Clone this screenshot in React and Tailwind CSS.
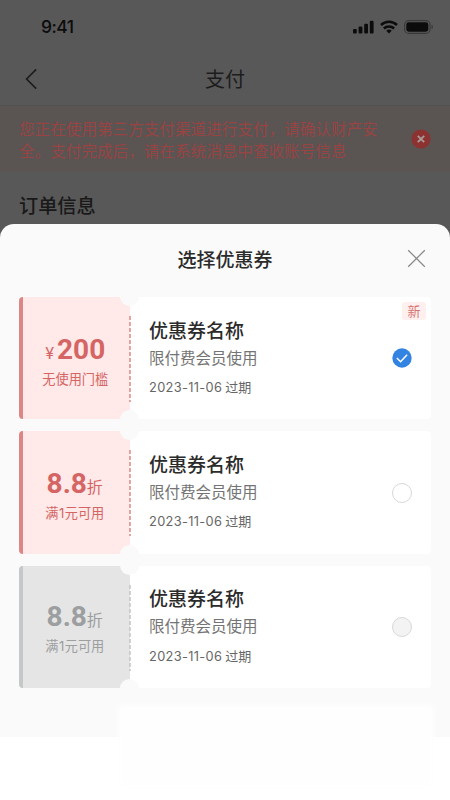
import React from "react";

const CJK = "font-['Noto_Sans_CJK_SC',sans-serif]";

function StatusBar() {
  return (
    <div className="flex h-[54px] items-center justify-between pl-[41px] pr-4 text-[#0c0c0c]">
      <span className="font-['Inter',sans-serif] text-[17.5px] font-medium leading-[22px] tracking-[-0.5px]">9:41</span>
      <div className="flex items-center gap-[6px]">
        <svg width="21" height="14" viewBox="0 0 21 14" fill="currentColor">
          <rect x="0" y="9" width="3.8" height="4.6" rx="1.1" />
          <rect x="5.6" y="6.6" width="3.8" height="7" rx="1.1" />
          <rect x="11.2" y="3.8" width="3.8" height="9.8" rx="1.1" />
          <rect x="16.8" y="0.8" width="3.8" height="12.8" rx="1.1" />
        </svg>
        <svg width="18" height="14" viewBox="0 0 18 14" fill="none" stroke="currentColor" strokeWidth="2.5">
          <path d="M1 5a11.4 11.4 0 0 1 16 0" />
          <path d="M3.9 8.5a7.2 7.2 0 0 1 10.2 0" />
          <path d="M9 13.5 6.3 10.8a3.9 3.9 0 0 1 5.4 0Z" fill="currentColor" stroke="none" />
        </svg>
        <svg width="30" height="14" viewBox="0 0 30 14" fill="none">
          <rect x="0.6" y="0.6" width="25.4" height="12.8" rx="4" stroke="#393939" strokeWidth="1.1" />
          <rect x="2.3" y="2.3" width="22" height="9.4" rx="2.4" fill="currentColor" />
          <path d="M27.5 4.8v4.4q1.5-.6 1.5-2.2t-1.5-2.2Z" fill="#393939" />
        </svg>
      </div>
    </div>
  );
}

function NavBar() {
  return (
    <div className="grid h-[52px] grid-cols-3 items-center border-b border-[#505050] pb-[2px] text-[#1c1c1c]">
      <svg className="ml-[25px]" width="13" height="22" viewBox="0 0 13 22" fill="none" stroke="currentColor" strokeWidth="1.6">
        <path d="M11.2 1.4 1.6 11l9.6 9.6" />
      </svg>
      <h1 className="text-center text-[20px] font-normal leading-6">支付</h1>
    </div>
  );
}

function Notice() {
  return (
    <div className="flex h-[66px] items-center bg-[#5a5453] pl-[19px] pr-[19px]">
      <p className="w-[372px] text-[15.6px] leading-[22px] text-[#984443]">
        您正在使用第三方支付渠道进行支付，请确认财产安
        <br />
        全。支付完成后，请在系统消息中查收账号信息
      </p>
      <svg className="ml-auto" width="20" height="20" viewBox="0 0 20 20">
        <circle cx="10" cy="10" r="9.6" fill="#8c3331" />
        <path d="m6.8 6.8 6.4 6.4m0-6.4-6.4 6.4" stroke="#a99998" strokeWidth="1.9" />
      </svg>
    </div>
  );
}

function Radio({ state }) {
  if (state === "checked") {
    return (
      <svg width="20" height="20" viewBox="0 0 20 20">
        <circle cx="10" cy="10" r="9.7" fill="#3384e2" />
        <path d="m4.9 10 3.7 3.7 6.5-6.9" fill="none" stroke="#fff" strokeWidth="1.6" />
      </svg>
    );
  }
  return (
    <span className={"block size-5 rounded-full border border-[#d8d8d8] " + (state === "disabled" ? "bg-[#f3f3f3]" : "bg-white")} />
  );
}

function Coupon({ amount, prefix, suffix, rule, state, muted, isNew }) {
  const face = muted
    ? "bg-[#e5e5e5] border-[#c5c8c8] text-[#9c9e9f] pt-[32px] pr-[3px]"
    : suffix
      ? "bg-[#ffe9e9] border-[#dc8787] text-[#d56564] pt-[34px] pr-[3px]"
      : "bg-[#ffe9e9] border-[#dc8787] text-[#d56564] pt-[34px] pr-[2px]";
  const line = muted ? "#bfc1c1" : "#d98280";
  return (
    <article className="relative flex h-[122.4px] overflow-hidden rounded-[4px] bg-white">
      <div className={"flex w-[110.5px] flex-col items-center border-l-4 " + face}>
        <div className="flex h-[37px] items-baseline whitespace-nowrap">
          {prefix && <span className="mr-[3px] font-['Inter',sans-serif] text-[16px] font-normal leading-[37px]">{prefix}</span>}
          <span className="font-['Roboto',sans-serif] text-[28px] font-bold leading-[37px]">{amount}</span>
          {suffix && <span className="text-[16px] font-normal leading-[37px]">{suffix}</span>}
        </div>
        <div className="text-[13.2px] leading-[22px]">
          {rule.split("1").map((part, i) => (
            <React.Fragment key={i}>
              {i > 0 && <span className="mx-[0.5px] font-['Inter',sans-serif]">1</span>}
              {part}
            </React.Fragment>
          ))}
        </div>
      </div>
      <svg className="absolute left-[109.5px] top-[19px]" width="2" height="86" viewBox="0 0 2 86">
        <path d="M1 0v86" stroke={line} strokeWidth="1.4" strokeDasharray="4 2" />
      </svg>
      <span className="absolute -top-[10px] left-[101px] size-[19px] rounded-full bg-[#fafafa]" />
      <span className="absolute -bottom-[10px] left-[101px] size-[19px] rounded-full bg-[#fafafa]" />
      <div className="flex-1 pl-[19.5px] pt-[18.5px]">
        <h3 className="text-[19px] font-medium leading-7 text-[#2b2b2b]">优惠券名称</h3>
        <p className="mt-[1px] text-[15.5px] leading-[24px] text-[#747474]">限付费会员使用</p>
        <p className="mt-[8.5px] text-[13px] leading-5 text-[#666]">
          <span className="font-['Inter',sans-serif] text-[12.8px] tracking-[0.35px]">2023-11-06</span> 过期
        </p>
      </div>
      <div className="flex items-center pr-[19px]">
        <Radio state={state} />
      </div>
      {isNew && (
        <span className="absolute right-[5px] top-[5px] flex h-[18px] w-6 items-center justify-center rounded-[3px] bg-[#fff0f0] text-[13px] leading-[18px] text-[#d87472]">
          新
        </span>
      )}
    </article>
  );
}

export default function App() {
  return (
    <div className={"flex h-[800px] w-[450px] flex-col overflow-hidden bg-white " + CJK}>
      <div className="h-[250px] shrink-0 bg-[#585858]">
        <StatusBar />
        <NavBar />
        <Notice />
        <h2 className="pl-[19px] pt-[19px] text-[19.2px] font-medium leading-7 text-[#191919]">订单信息</h2>
      </div>
      <section className="relative -mt-[26px] h-[513px] shrink-0 rounded-t-[14px] bg-[#fafafa]">
        <header className="grid h-[73px] grid-cols-[1fr_auto_1fr] items-center">
          <h2 className="col-start-2 -mt-[3px] text-[19px] font-medium leading-7 text-[#2b2b2b]">选择优惠券</h2>
          <button className="mr-6 justify-self-end" aria-label="关闭">
            <svg className="-mt-[5px]" width="19" height="19" viewBox="0 0 19 19" stroke="#8a8a8a" strokeWidth="1.3">
              <path d="m1.2 1.2 16.6 16.6m0-16.6L1.2 17.8" />
            </svg>
          </button>
        </header>
        <div className="flex flex-col gap-[12px] pl-[19px] pr-[19px]">
          <Coupon prefix="¥" amount="200" rule="无使用门槛" state="checked" isNew />
          <Coupon amount="8.8" suffix="折" rule="满1元可用" state="empty" />
          <Coupon amount="8.8" suffix="折" rule="满1元可用" state="disabled" muted />
        </div>
      </section>
      <div className="relative -mt-[32px] ml-[118px] h-[80px] w-[316px] bg-[#fefefe] blur-[3px]" />
    </div>
  );
}
